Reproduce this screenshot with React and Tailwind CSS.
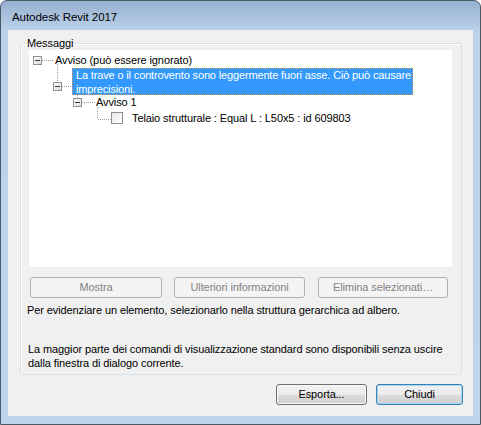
import React from "react";

const font = "font-['Liberation_Sans',Arial,sans-serif]";

function Btn({ children, w, disabled, def }) {
  const base =
    "h-[21px] rounded-[3px] border text-[11px] tracking-[-0.1px] flex items-center justify-center shrink-0";
  if (disabled)
    return (
      <div className={`${base} ${w} border-[#adb2b5] bg-[#f4f4f4] text-[#838383]`}>{children}</div>
    );
  return (
    <div
      className={`${base} ${w} text-black bg-[linear-gradient(to_bottom,#f2f2f2_0%,#ebebeb_50%,#dddddd_50%,#cfcfcf_100%)] ${
        def
          ? "border-[#3c7fb1] shadow-[inset_0_0_0_1px_#9ed8f5]"
          : "border-[#707070] shadow-[inset_0_0_0_1px_#fafafa]"
      }`}
    >
      {children}
    </div>
  );
}

function TreeLines() {
  const dot = { stroke: "#a0a0a0", strokeWidth: 1, strokeDasharray: "1 1" };
  const Box = ({ x, y }) => (
    <g>
      <rect x={x + 0.5} y={y + 0.5} width="8" height="8" fill="url(#bx)" stroke="#919191" />
      <line x1={x + 2} x2={x + 7} y1={y + 4.5} y2={y + 4.5} stroke="#3a3a3a" />
    </g>
  );
  return (
    <svg className="absolute left-0 top-0 pointer-events-none" width="423" height="217">
      <defs>
        <linearGradient id="bx" x1="0" y1="0" x2="1" y2="1">
          <stop offset="0" stopColor="#ffffff" />
          <stop offset="1" stopColor="#d8d8d8" />
        </linearGradient>
      </defs>
      <line x1="13" x2="25" y1="10.5" y2="10.5" {...dot} />
      <line x1="28.5" x2="28.5" y1="12" y2="32" {...dot} />
      <line x1="33" x2="43" y1="36.5" y2="36.5" {...dot} />
      <line x1="48.5" x2="48.5" y1="45" y2="48" {...dot} />
      <line x1="53" x2="66" y1="52.5" y2="52.5" {...dot} />
      <line x1="68.5" x2="68.5" y1="57" y2="69" {...dot} />
      <line x1="69" x2="82" y1="69.5" y2="69.5" {...dot} />
      <Box x={4} y={6} />
      <Box x={24} y={32} />
      <Box x={44} y={48} />
    </svg>
  );
}

export default function App() {
  return (
    <div
      className={`${font} w-[481px] h-[425px] rounded-t-[7px] border border-[#4b5866] bg-[linear-gradient(to_bottom,#95b0d0_0px,#bcd2ea_30px,#bdd4ec_100%)] flex flex-col overflow-hidden`}
    >
      <div className="h-[29px] flex items-center pl-[11px] pt-[5px] text-[11.5px] text-black tracking-[-0.05px]">
        Autodesk Revit 2017
      </div>

      <div className="mx-[7px] h-[386px] bg-[#f0f0f0] flex flex-col pt-[6px] pl-[12px] pr-[10px]">
        <fieldset className="w-[442px] border border-[#d5dfe5] rounded-[3px] shadow-[inset_1px_1px_0_#ffffff] pl-[8px] pr-[9px] pb-[4px] flex flex-col">
          <legend className="-ml-[3px] px-[1px] text-[11px] leading-[14px] tracking-[-0.1px] text-black">
            Messaggi
          </legend>

          <div className="relative bg-white w-[423px] h-[217px] text-[11px] tracking-[-0.1px] text-black pt-[3px]">
            <TreeLines />
            <div className="h-[15px] flex items-center ml-[26px] whitespace-nowrap">
              Avviso (può essere ignorato)
            </div>
            <div className="ml-[43px] w-[341px] h-[27px] bg-[#3399ff] text-white px-[4px] leading-[14px] tracking-[-0.15px] outline outline-1 outline-dotted outline-[#d9925a] -outline-offset-1 whitespace-nowrap">
              La trave o il controvento sono leggermente fuori asse. Ciò può causare
              <br />
              imprecisioni.
            </div>
            <div className="h-[14px] flex items-center ml-[67px] whitespace-nowrap">Avviso 1</div>
            <div className="h-[18px] flex items-center ml-[82px] whitespace-nowrap">
              <div className="w-[12px] h-[12px] border border-[#8f8f8f] bg-[linear-gradient(135deg,#e8e8e8,#ffffff)] mr-[9px] shrink-0" />
              Telaio strutturale : Equal L : L50x5 : id 609803
            </div>
          </div>

          <div className="flex mt-[10px] ml-[1px]">
            <Btn w="w-[132px]" disabled>
              Mostra
            </Btn>
            <div className="w-[12px]" />
            <Btn w="w-[131px]" disabled>
              Ulteriori informazioni
            </Btn>
            <div className="w-[13px]" />
            <Btn w="w-[130px]" disabled>
              Elimina selezionati…
            </Btn>
          </div>

          <div className="mt-[5px] -ml-[2px] text-[11px] leading-[14px] tracking-[-0.1px] text-black whitespace-nowrap">
            Per evidenziare un elemento, selezionarlo nella struttura gerarchica ad albero.
          </div>
          <div className="mt-[25px] -ml-[1px] text-[11px] leading-[14px] tracking-[-0.1px] text-black whitespace-nowrap">
            La maggior parte dei comandi di visualizzazione standard sono disponibili senza uscire
            <br />
            dalla finestra di dialogo corrente.
          </div>
        </fieldset>

        <div className="flex justify-end mt-[9px]">
          <Btn w="w-[91px]">Esporta...</Btn>
          <div className="w-[9px]" />
          <Btn w="w-[87px]" def>
            Chiudi
          </Btn>
        </div>
      </div>
    </div>
  );
}
